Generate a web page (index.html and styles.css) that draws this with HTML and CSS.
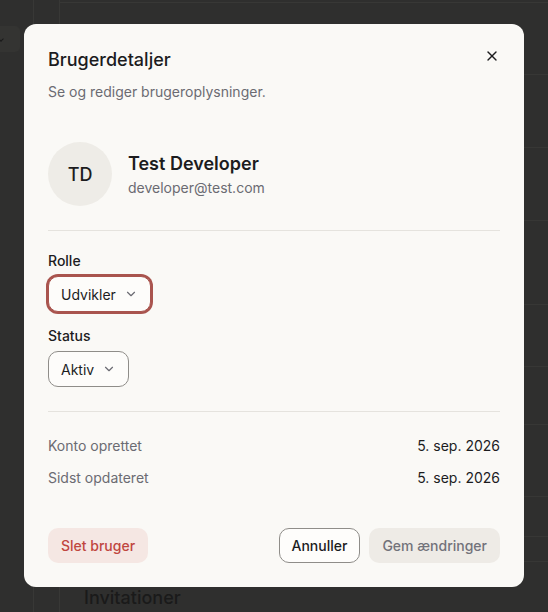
FILE: index.html
```html
<!DOCTYPE html>
<html lang="da">
<head>
<meta charset="utf-8">
<title>Brugerdetaljer</title>
<link rel="stylesheet" href="styles.css">
</head>
<body>
<div class="page">
  <aside class="rail rail-a">
    <div class="rail-btn"><span class="rail-mark"></span></div>
  </aside>
  <aside class="rail rail-b"></aside>
  <main class="main">
    <div class="topbar"></div>
    <div class="rows">
      <div class="row r1"></div>
      <div class="row r2"></div>
      <div class="row r3"></div>
      <div class="row r4"></div>
      <div class="row r5"></div>
      <div class="row r6"></div>
      <div class="row r7"></div>
      <div class="row r8"></div>
      <div class="row r9"></div>
    </div>
    <h2 class="section-title">Invitationer</h2>
  </main>
</div>

<div class="dialog" role="dialog" aria-labelledby="dlg-title">
  <button class="close" aria-label="Luk">
    <svg viewBox="0 0 24 24" width="16" height="16" fill="none" stroke="currentColor" stroke-width="2" stroke-linecap="round" stroke-linejoin="round"><path d="M18 6 6 18"/><path d="m6 6 12 12"/></svg>
  </button>
  <header class="dialog-head">
    <h1 id="dlg-title" class="dialog-title">Brugerdetaljer</h1>
    <p class="dialog-sub">Se og rediger brugeroplysninger.</p>
  </header>

  <section class="profile">
    <div class="avatar">TD</div>
    <div class="who">
      <div class="name">Test Developer</div>
      <div class="email">developer@test.com</div>
    </div>
  </section>

  <hr class="sep">

  <section class="fields">
    <div class="field">
      <label class="field-label">Rolle</label>
      <button class="select is-focused">Udvikler
        <svg class="chev" viewBox="0 0 24 24" width="14" height="14" fill="none" stroke="currentColor" stroke-width="2" stroke-linecap="round" stroke-linejoin="round"><path d="m6 9 6 6 6-6"/></svg>
      </button>
    </div>
    <div class="field">
      <label class="field-label">Status</label>
      <button class="select">Aktiv
        <svg class="chev" viewBox="0 0 24 24" width="14" height="14" fill="none" stroke="currentColor" stroke-width="2" stroke-linecap="round" stroke-linejoin="round"><path d="m6 9 6 6 6-6"/></svg>
      </button>
    </div>
  </section>

  <hr class="sep">

  <dl class="meta">
    <div class="meta-row"><dt>Konto oprettet</dt><dd>5. sep. 2026</dd></div>
    <div class="meta-row"><dt>Sidst opdateret</dt><dd>5. sep. 2026</dd></div>
  </dl>

  <footer class="dialog-foot">
    <button class="btn btn-danger">Slet bruger</button>
    <div class="foot-right">
      <button class="btn btn-outline">Annuller</button>
      <button class="btn btn-muted">Gem ændringer</button>
    </div>
  </footer>
</div>
</body>
</html>
```

FILE: styles.css
```css
* { box-sizing: border-box; }

html, body {
  margin: 0;
  padding: 0;
  height: 100%;
}

body {
  background: #2f2f2e;
  font-family: Inter, "Noto Sans", "Liberation Sans", sans-serif;
  color: #1c1c1e;
  overflow: hidden;
}

/* ---------- dimmed background page ---------- */
.page {
  display: flex;
  height: 612px;
}

.rail {
  flex: none;
  border-right: 1px solid #383836;
}

.rail-a {
  width: 34px;
  padding-top: 26px;
}

.rail-b {
  width: 26px;
}

.rail-btn {
  width: 20px;
  height: 26px;
  background: #343432;
  border-radius: 0 5px 5px 0;
  display: flex;
  align-items: center;
}

.rail-mark {
  width: 4px;
  height: 4px;
  margin-left: -1px;
  border-right: 1px solid #1a1a1a;
  border-bottom: 1px solid #1a1a1a;
  transform: rotate(45deg);
}

.main {
  flex: 1;
  display: flex;
  flex-direction: column;
}

.topbar {
  height: 6px;
  border-bottom: 1px solid #383836;
}

.row { border-bottom: 1px solid #373735; }
.r1 { height: 72px; }
.r2 { height: 73px; }
.r3 { height: 73px; }
.r4 { height: 84px; }
.r5 { height: 62px; }
.r6 { height: 58px; }
.r7 { height: 72px; }
.r8 { height: 40px; }
.r9 { height: 25px; }

.section-title {
  margin: 22px 0 0 24px;
  font-size: 18px;
  line-height: 28px;
  font-weight: 500;
  color: #1a1a1a;
}

/* ---------- dialog ---------- */
.dialog {
  position: absolute;
  left: 24px;
  top: 24px;
  width: 500px;
  padding: 24px;
  background: #faf9f6;
  border-radius: 12px;
}

.close {
  position: absolute;
  top: 24px;
  right: 24px;
  width: 16px;
  height: 16px;
  padding: 0;
  border: 0;
  background: none;
  color: #1c1c1e;
  display: flex;
}

.dialog-title {
  margin: 0;
  font-size: 18px;
  line-height: 24px;
  font-weight: 500;
  color: #1c1c1e;
}

.dialog-sub {
  margin: 10px 0 0;
  font-size: 14px;
  line-height: 20px;
  color: #6b6b72;
}

.profile {
  margin-top: 40px;
  display: flex;
  align-items: center;
  gap: 16px;
}

.avatar {
  width: 64px;
  height: 64px;
  border-radius: 50%;
  background: #eeece7;
  display: flex;
  align-items: center;
  justify-content: center;
  font-size: 18px;
  font-weight: 500;
  color: #1c1c1e;
}

.name {
  font-size: 18px;
  line-height: 28px;
  font-weight: 600;
  color: #1c1c1e;
}

.email {
  font-size: 14px;
  line-height: 20px;
  color: #6b6b72;
}

.sep {
  margin: 24px 0 0;
  border: 0;
  height: 1px;
  background: #e5e3de;
}

.fields {
  margin-top: 20px;
  display: flex;
  flex-direction: column;
  gap: 14px;
}

.field {
  display: flex;
  flex-direction: column;
  align-items: flex-start;
  gap: 5px;
}

.field-label {
  font-size: 14px;
  line-height: 20px;
  font-weight: 500;
  color: #1c1c1e;
}

.select {
  height: 36px;
  padding: 0 12px;
  border: 1px solid #8f8d89;
  border-radius: 10px;
  background: #fdfcfa;
  display: inline-flex;
  align-items: center;
  gap: 8px;
  font: inherit;
  font-size: 14px;
  color: #1c1c1e;
}

.select.is-focused {
  border-color: #a9544e;
  box-shadow: 0 0 0 2px #a9544e;
}

.chev { color: #6b6b72; flex: none; }

.meta {
  margin: 24px 0 0;
  display: flex;
  flex-direction: column;
  gap: 12px;
}

.meta-row {
  display: flex;
  justify-content: space-between;
  font-size: 14px;
  line-height: 20px;
}

.meta-row dt { color: #6b6b72; }
.meta-row dd { margin: 0; color: #1c1c1e; }

.dialog-foot {
  margin-top: 40px;
  display: flex;
  justify-content: space-between;
  align-items: center;
}

.foot-right {
  display: flex;
  gap: 9px;
}

.btn {
  height: 35px;
  padding: 0 12px;
  border-radius: 10px;
  border: 1px solid transparent;
  font: inherit;
  font-size: 14px;
  font-weight: 500;
  display: inline-flex;
  align-items: center;
}

.btn-danger {
  background: #f5e7e3;
  color: #c0463f;
}

.btn-outline {
  background: #fefdfb;
  border-color: #8f8d89;
  color: #1c1c1e;
}

.btn-muted {
  background: #eeebe6;
  color: #72727a;
}
```
